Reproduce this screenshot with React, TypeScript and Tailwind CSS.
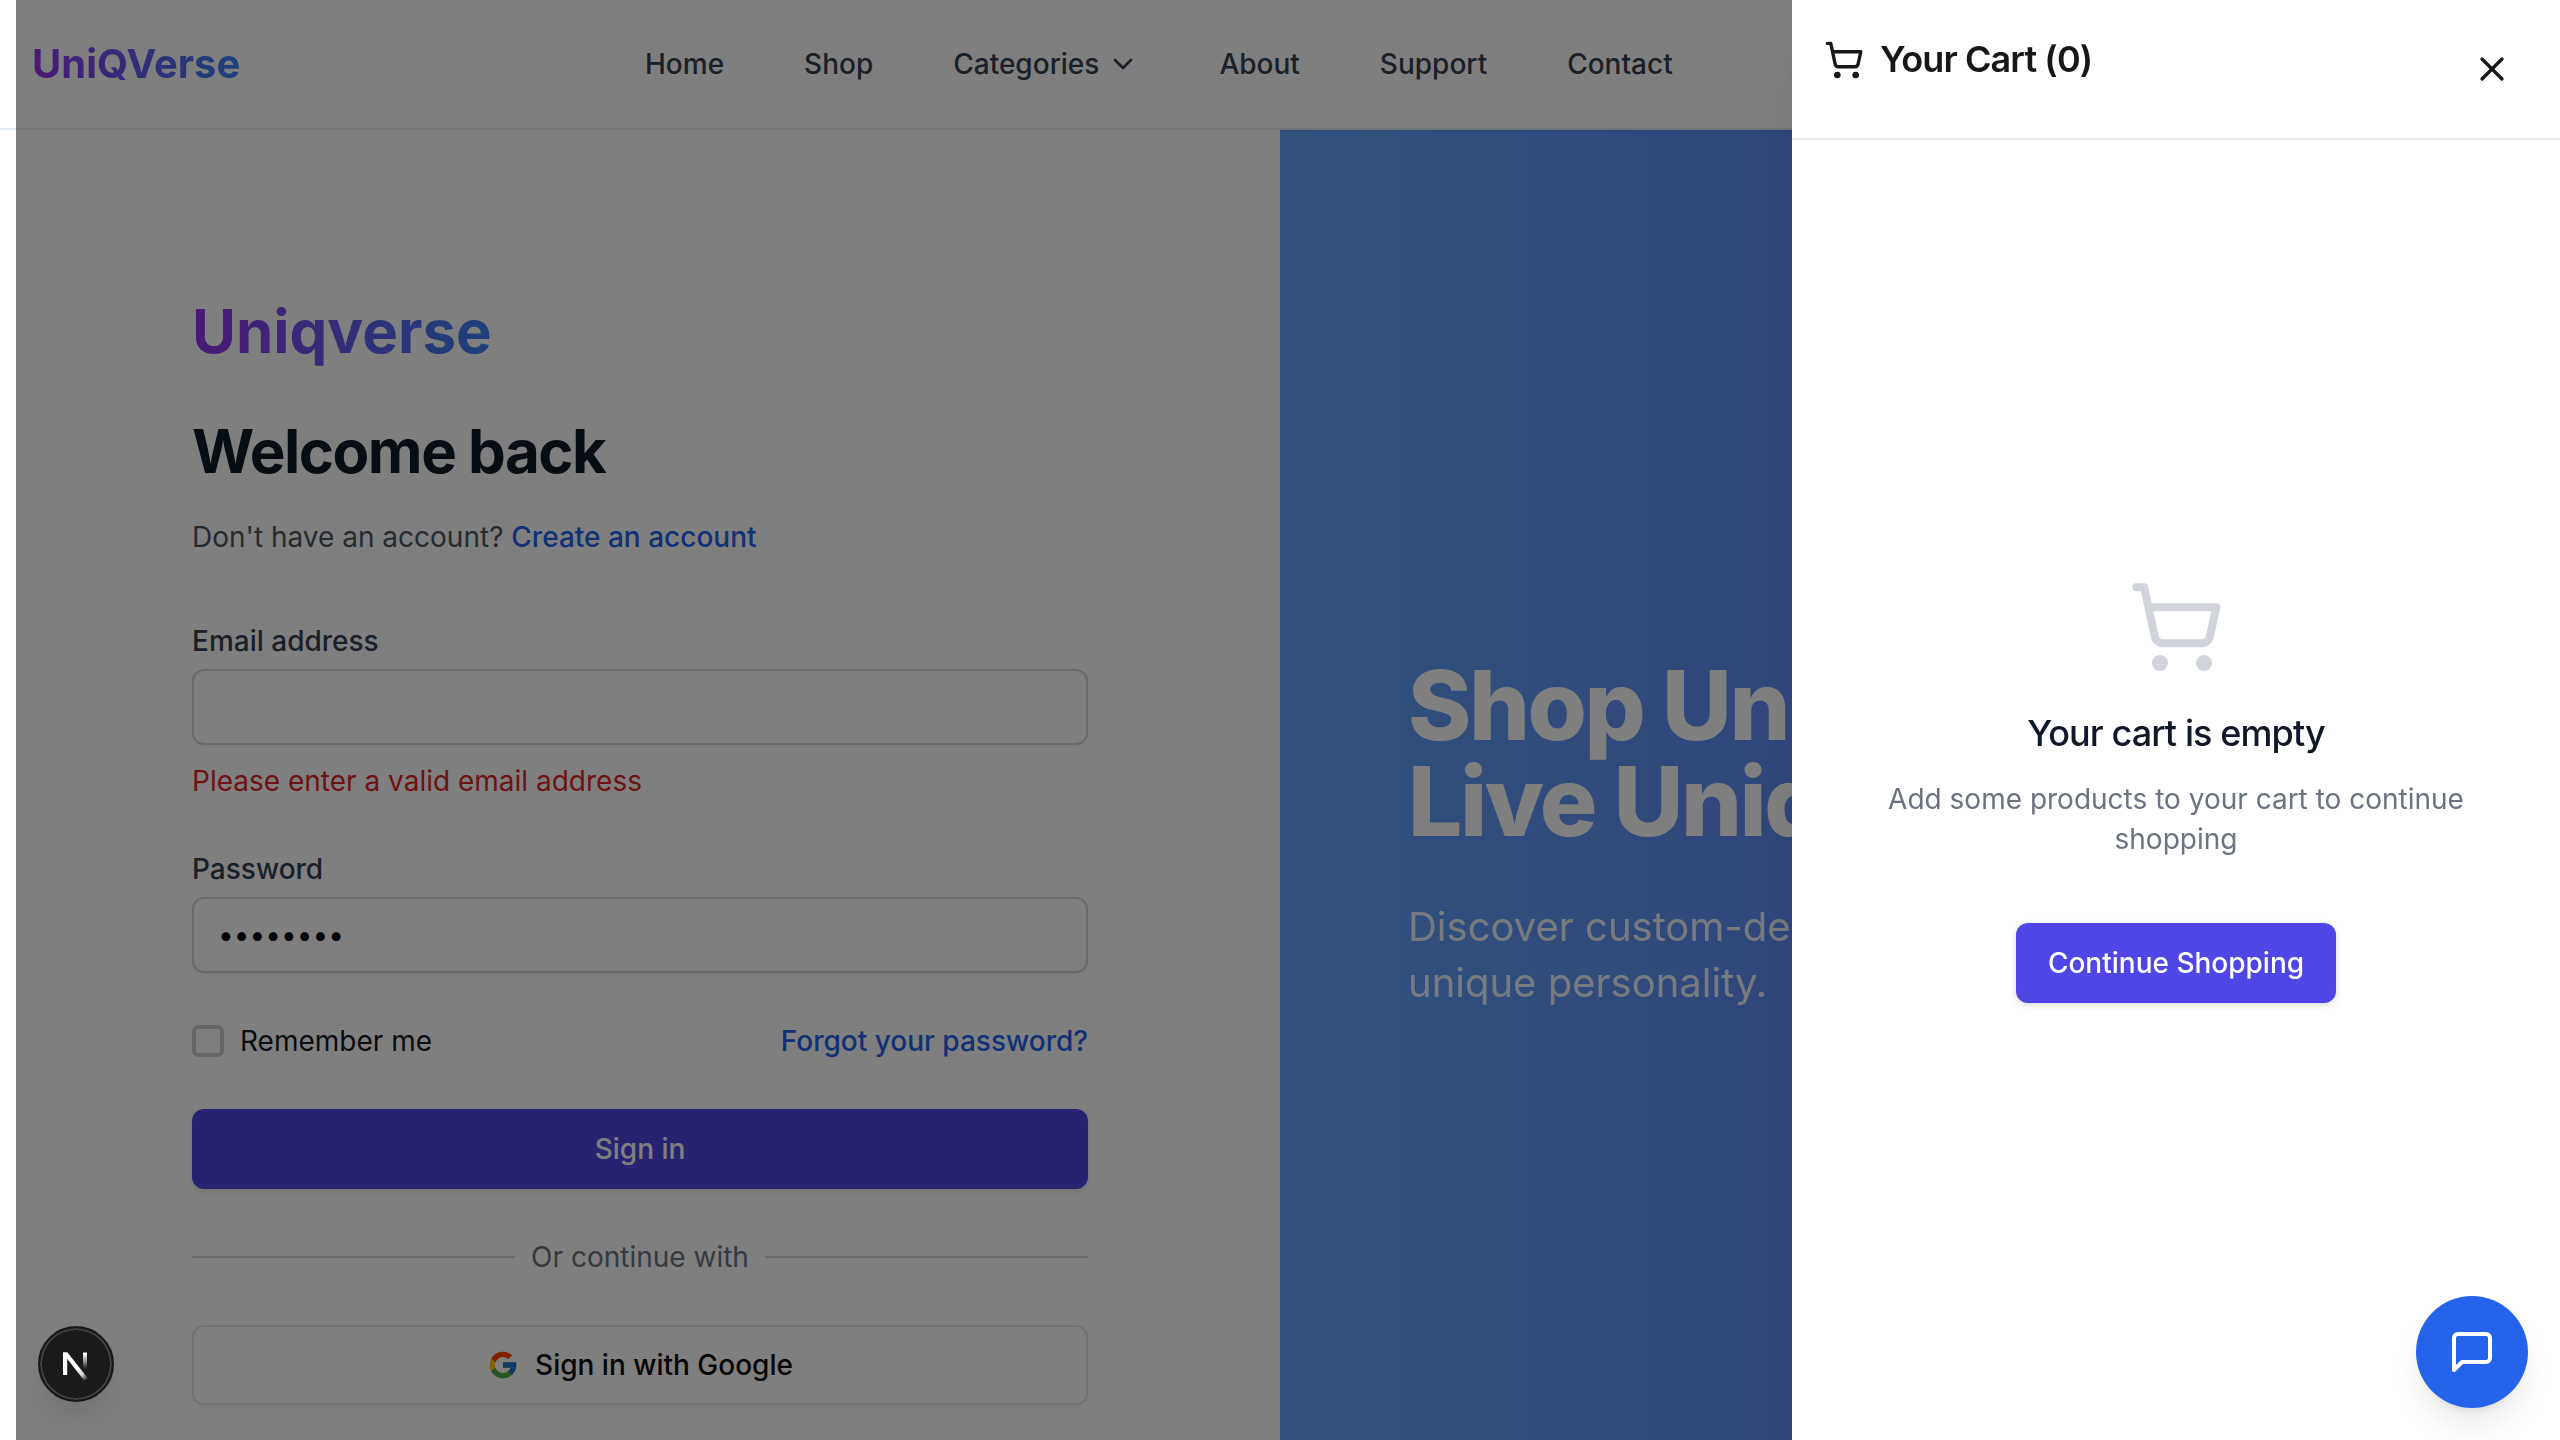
import { ChevronDown, ShoppingCart, X } from "lucide-react";
import { FcGoogle } from "react-icons/fc";

function NavLink({ label }: { label: string }) {
  return (
    <a href="#" className="hover:text-[#4f46e5]">
      {label}
    </a>
  );
}

function Header() {
  return (
    <header className="flex h-[130px] shrink-0 items-center border-b-2 border-[#e2e8f0] bg-white px-8">
      <div className="w-[613px] shrink-0">
        <a
          href="#"
          className="inline-block bg-linear-to-r/srgb from-[#9333ea] to-[#3b82f6] bg-clip-text text-[40px] leading-[56px] font-bold text-transparent"
        >
          UniQVerse
        </a>
      </div>
      <nav className="flex items-center gap-20 text-[28px] leading-10 font-medium text-[#374151]">
        <NavLink label="Home" />
        <NavLink label="Shop" />
        <button type="button" className="flex items-center gap-2">
          Categories
          <ChevronDown className="size-8" />
        </button>
        <NavLink label="About" />
        <NavLink label="Support" />
        <NavLink label="Contact" />
      </nav>
    </header>
  );
}

const inputClass =
  "mt-2 h-[76px] w-full rounded-xl border-2 border-[#d4d4d8] bg-white px-6 text-[28px] text-black shadow-[0_2px_4px_rgba(0,0,0,0.05)] outline-none";

function LoginForm() {
  return (
    <section className="flex w-1/2 justify-center bg-white pt-[165px]">
      <form
        className="flex w-full max-w-[896px] flex-col text-[28px] leading-10"
        onSubmit={(e) => e.preventDefault()}
      >
        <a
          href="#"
          className="self-start bg-linear-to-r/srgb from-[#9333ea] to-[#3b82f6] bg-clip-text text-[60px] leading-[72px] font-bold text-transparent"
        >
          Uniqverse
        </a>
        <h1 className="mt-12 text-[60px] leading-[72px] font-bold tracking-tight text-[#111827]">
          Welcome back
        </h1>
        <p className="mt-[30px] text-[#4b5563]">
          Don't have an account?{" "}
          <a href="#" className="font-medium text-[#2563eb]">
            Create an account
          </a>
        </p>

        <label htmlFor="email" className="mt-16 font-medium text-[#374151]">
          Email address
        </label>
        <input id="email" type="email" className={inputClass} />
        <p className="mt-4 text-[#dc2626]">Please enter a valid email address</p>

        <label htmlFor="password" className="mt-12 font-medium text-[#374151]">
          Password
        </label>
        <input id="password" type="password" defaultValue="password" className={inputClass} />

        <div className="mt-12 flex items-center justify-between">
          <label className="flex items-center gap-4 text-[#111827]">
            <input
              type="checkbox"
              className="size-8 appearance-none rounded-md border-4 border-[#cfcfcf] bg-white checked:bg-[#4f46e5]"
            />
            Remember me
          </label>
          <a href="#" className="font-medium text-[#2563eb]">
            Forgot your password?
          </a>
        </div>

        <button
          type="submit"
          className="mt-12 h-20 rounded-xl bg-[#4f46e5] font-medium text-white shadow-[0_2px_6px_rgba(0,0,0,0.1)]"
        >
          Sign in
        </button>

        <div className="mt-12 flex items-center gap-4 text-[#6b7280]">
          <span className="h-0.5 flex-1 bg-[#d1d5db]" />
          Or continue with
          <span className="h-0.5 flex-1 bg-[#d1d5db]" />
        </div>

        <button
          type="button"
          className="mt-12 flex h-20 items-center justify-center gap-4 rounded-xl border-2 border-[#e5e5e5] bg-white font-medium text-[#0a0a0a] shadow-[0_2px_4px_rgba(0,0,0,0.05)]"
        >
          <FcGoogle className="size-8" />
          Sign in with Google
        </button>
      </form>
    </section>
  );
}

function Hero() {
  return (
    <section className="flex w-1/2 flex-col justify-center bg-linear-to-r/srgb from-[#60a5fa] to-[#6366f1] px-32 text-white">
      <h2 className="text-[96px] leading-none font-extrabold tracking-tight">
        Shop Uniquely,
        <br />
        Live Uniquely.
      </h2>
      <p className="mt-[50px] text-[40px] leading-[56px] opacity-90">
        Discover custom-designed products that match your unique personality.
      </p>
    </section>
  );
}

function CartDrawer() {
  return (
    <aside
      role="dialog"
      aria-label="Your cart"
      className="fixed inset-y-0 right-0 z-20 flex w-full max-w-[768px] flex-col bg-white shadow-[0_40px_50px_-10px_rgba(0,0,0,0.1),0_16px_20px_-12px_rgba(0,0,0,0.1)]"
    >
      <div className="flex h-[140px] shrink-0 items-center justify-between border-b-2 border-[#e5e7eb] pr-10 pl-8 text-[#171717]">
        <h2 className="flex items-start gap-4 self-start pt-10 text-[36px] leading-[38px] font-semibold tracking-tight">
          <ShoppingCart className="size-10" />
          Your Cart (0)
        </h2>
        <button type="button" aria-label="Close cart" className="p-2">
          <X className="size-10" />
        </button>
      </div>
      <div className="flex flex-1 flex-col items-center justify-center px-16 pt-0.5 text-center">
        <ShoppingCart className="size-24 text-[#d1d5db]" />
        <h3 className="mt-8 text-[36px] leading-[52px] font-medium tracking-tight text-[#111827]">
          Your cart is empty
        </h3>
        <p className="mt-5 text-[28px] leading-10 text-[#6b7280]">
          Add some products to your cart to continue shopping
        </p>
        <button
          type="button"
          className="mt-16 h-20 rounded-xl bg-[#4f46e5] px-8 text-[28px] font-medium text-white shadow-[0_2px_6px_rgba(0,0,0,0.15)]"
        >
          Continue Shopping
        </button>
      </div>
    </aside>
  );
}

function DevBadge() {
  return (
    <button
      type="button"
      aria-label="Open developer tools"
      className="fixed bottom-[38px] left-[38px] z-30 flex size-[76px] items-center justify-center rounded-full border-2 border-[#171717] bg-[#1a1a1a] shadow-[inset_0_0_0_2px_#404040,0_16px_32px_-8px_rgba(0,0,0,0.15)]"
    >
      <svg viewBox="0 0 72 72" className="size-[72px]" fill="none">
        <defs>
          <linearGradient id="diag" x1="38" y1="41" x2="47" y2="52" gradientUnits="userSpaceOnUse">
            <stop stopColor="white" />
            <stop offset="0.5" stopColor="white" stopOpacity="0.8" />
            <stop offset="1" stopColor="white" stopOpacity="0" />
          </linearGradient>
          <linearGradient id="stem" x1="45" y1="26" x2="45" y2="41" gradientUnits="userSpaceOnUse">
            <stop stopColor="white" />
            <stop offset="1" stopColor="white" stopOpacity="0" />
          </linearGradient>
        </defs>
        <path d="M23 24.5H27.5L48 50.5L44.6 53L23 25.5Z" fill="url(#diag)" />
        <rect x="23" y="24.5" width="4.2" height="22.5" fill="white" />
        <rect x="43" y="24.5" width="4" height="17" fill="url(#stem)" />
      </svg>
    </button>
  );
}

function ChatButton() {
  return (
    <button
      type="button"
      aria-label="Open chat"
      className="fixed right-8 bottom-8 z-30 flex size-28 items-center justify-center rounded-full bg-[#2563eb] text-white shadow-[0_20px_30px_-6px_rgba(0,0,0,0.1),0_8px_12px_-8px_rgba(0,0,0,0.1)]"
    >
      <svg
        viewBox="0 0 24 24"
        className="size-12"
        fill="none"
        stroke="currentColor"
        strokeWidth="2"
        strokeLinecap="round"
        strokeLinejoin="round"
      >
        <path d="M21 15a2 2 0 0 1-2 2H7l-4 4V5a2 2 0 0 1 2-2h14a2 2 0 0 1 2 2z" />
      </svg>
    </button>
  );
}

export default function App() {
  return (
    <div className="flex h-screen flex-col overflow-hidden bg-white font-['Inter',sans-serif] antialiased">
      <Header />
      <main className="flex min-h-[1408px]">
        <LoginForm />
        <Hero />
      </main>
      <div className="fixed inset-y-0 right-0 left-4 z-10 bg-black/50" />
      <CartDrawer />
      <DevBadge />
      <ChatButton />
    </div>
  );
}
